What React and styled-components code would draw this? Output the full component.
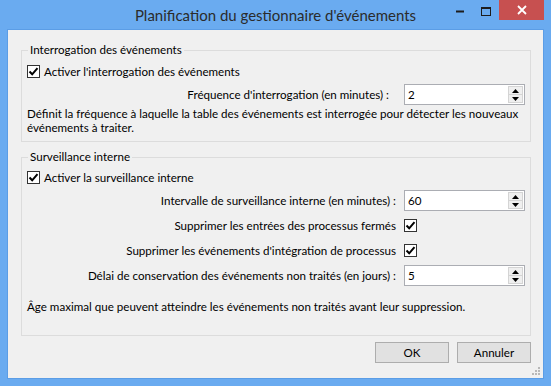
import styled, { createGlobalStyle } from "styled-components";

const StyleGlobal = createGlobalStyle`
  html, body {
    margin: 0;
    padding: 0;
    background: #6aabf0;
  }
  body {
    font-family: Lato, "Liberation Sans", sans-serif;
    font-size: 11.6px;
    color: #000000;
  }
`;

function Coche() {
  return (
    <svg width="11" height="11" viewBox="0 0 11 11">
      <path d="M1.5 5.5 L4.2 8.3 L9.5 2.2" fill="none" stroke="#000" strokeWidth="2" />
    </svg>
  );
}

function CaseACocher({ label }) {
  return (
    <LigneCase>
      <Case>
        <Coche />
      </Case>
      {label && <span>{label}</span>}
    </LigneCase>
  );
}

function ChampNumerique({ valeur }) {
  return (
    <Champ>
      <Valeur>{valeur}</Valeur>
      <Fleches>
        <Fleche>
          <svg width="7" height="4" viewBox="0 0 7 4">
            <path d="M0 4 L3.5 0 L7 4 Z" fill="#000" />
          </svg>
        </Fleche>
        <Fleche $bas>
          <svg width="7" height="4" viewBox="0 0 7 4">
            <path d="M0 0 L7 0 L3.5 4 Z" fill="#000" />
          </svg>
        </Fleche>
      </Fleches>
    </Champ>
  );
}

export default function App() {
  return (
    <>
      <StyleGlobal />
      <Fenetre>
        <BarreTitre>
          <span />
          <Titre>Planification du gestionnaire d'événements</Titre>
          <Commandes>
            <BoutonFenetre>
              <svg width="9" height="3" viewBox="0 0 9 3">
                <rect x="0" y="0.5" width="8" height="2" fill="#1d1d1d" />
              </svg>
            </BoutonFenetre>
            <BoutonFenetre>
              <svg width="10" height="9" viewBox="0 0 10 9">
                <rect x="0.5" y="1" width="9" height="7.5" fill="none" stroke="#1d1d1d" strokeWidth="1" />
                <rect x="0" y="0" width="10" height="2" fill="#1d1d1d" />
              </svg>
            </BoutonFenetre>
            <BoutonFermer>
              <svg width="10" height="10" viewBox="0 0 10 10">
                <path d="M1 1 L9 9 M9 1 L1 9" stroke="#fff" strokeWidth="1.8" />
              </svg>
            </BoutonFermer>
          </Commandes>
        </BarreTitre>

        <Client>
          <Groupe>
            <Legende>Interrogation des événements</Legende>
            <LigneActivation>
              <CaseACocher label="Activer l'interrogation des événements" />
            </LigneActivation>
            <Grille $ecart={15}>
              <Libelle>Fréquence d'interrogation (en minutes) :</Libelle>
              <ChampNumerique valeur="2" />
            </Grille>
            <Description $haut={2}>
              Définit la fréquence à laquelle la table des événements est interrogée pour détecter les nouveaux
              événements à traiter.
            </Description>
          </Groupe>

          <Groupe $bas={21} $marge={8}>
            <Legende>Surveillance interne</Legende>
            <LigneActivation $haut={5}>
              <CaseACocher label="Activer la surveillance interne" />
            </LigneActivation>
            <Grille $ecart={8}>
              <Libelle>Intervalle de surveillance interne (en minutes) :</Libelle>
              <ChampNumerique valeur="60" />
              <Libelle>Supprimer les entrées des processus fermés</Libelle>
              <CaseACocher />
              <Libelle>Supprimer les événements d'intégration de processus</Libelle>
              <CaseACocher />
              <Libelle>Délai de conservation des événements non traités (en jours) :</Libelle>
              <ChampNumerique valeur="5" />
            </Grille>
            <Description $haut={14}>
              Âge maximal que peuvent atteindre les événements non traités avant leur suppression.
            </Description>
          </Groupe>

          <Boutons>
            <Bouton>OK</Bouton>
            <Bouton>Annuler</Bouton>
          </Boutons>

          <Poignee width="9" height="9" viewBox="0 0 9 9">
            <rect x="6" y="0" width="2" height="2" fill="#b8b8b8" />
            <rect x="3" y="3" width="2" height="2" fill="#b8b8b8" />
            <rect x="6" y="3" width="2" height="2" fill="#b8b8b8" />
            <rect x="0" y="6" width="2" height="2" fill="#b8b8b8" />
            <rect x="3" y="6" width="2" height="2" fill="#b8b8b8" />
            <rect x="6" y="6" width="2" height="2" fill="#b8b8b8" />
          </Poignee>
        </Client>
      </Fenetre>
    </>
  );
}

const Fenetre = styled.div`
  width: 551px;
  height: 386px;
  box-sizing: border-box;
  background: #6aabf0;
  padding: 0 7px 7px 7px;
  display: flex;
  flex-direction: column;
`;

const BarreTitre = styled.div`
  height: 29px;
  display: grid;
  grid-template-columns: 1fr auto 1fr;
  align-items: start;
`;

const Titre = styled.div`
  font-size: 15px;
  line-height: 20px;
  padding-top: 5px;
  color: #2b2b2b;
  white-space: nowrap;
`;

const Commandes = styled.div`
  justify-self: end;
  display: flex;
  align-items: stretch;
  height: 20px;
`;

const BoutonFenetre = styled.div`
  width: 26px;
  display: flex;
  align-items: center;
  justify-content: center;
  padding-top: 3px;
  box-sizing: border-box;
`;

const BoutonFermer = styled.div`
  width: 45px;
  background: #c75050;
  display: flex;
  align-items: center;
  justify-content: center;
`;

const Client = styled.div`
  position: relative;
  flex: 1;
  background: #f0f0f0;
  border: 1px solid #5b9de6;
  padding: 13px 12px 0 13px;
  display: flex;
  flex-direction: column;
`;

const Groupe = styled.fieldset`
  margin: ${(p) => p.$marge || 0}px 0 0 0;
  padding: 0 5px ${(p) => (p.$bas === undefined ? 6 : p.$bas)}px 5px;
  border: 1px solid #dcdcdc;
  min-width: 0;
`;

const Legende = styled.legend`
  padding: 0 2px;
  margin-left: 1px;
  line-height: 14px;
`;

const LigneActivation = styled.div`
  margin-top: ${(p) => (p.$haut === undefined ? 6 : p.$haut)}px;
  height: 16px;
  display: flex;
  align-items: center;
`;

const LigneCase = styled.div`
  display: flex;
  align-items: center;
  gap: 4px;
  height: 21px;
  white-space: nowrap;
`;

const Case = styled.div`
  width: 13px;
  height: 13px;
  box-sizing: border-box;
  border: 1px solid #333333;
  background: #ffffff;
  display: flex;
  align-items: center;
  justify-content: center;
`;

const Grille = styled.div`
  margin-top: 5px;
  display: grid;
  grid-template-columns: 1fr 121px;
  grid-auto-rows: 21px;
  column-gap: ${(p) => p.$ecart}px;
  row-gap: 4px;
  align-items: center;
`;

const Libelle = styled.div`
  text-align: right;
  white-space: nowrap;
`;

const Champ = styled.div`
  height: 21px;
  box-sizing: border-box;
  border: 1px solid #abadb3;
  background: #ffffff;
  display: flex;
  align-items: center;
`;

const Valeur = styled.div`
  flex: 1;
  padding-left: 3px;
`;

const Fleches = styled.div`
  width: 15px;
  height: 17px;
  margin-right: 1px;
  display: flex;
  flex-direction: column;
  border: 1px solid #d4d4d4;
  box-sizing: border-box;
  background: #efefef;
`;

const Fleche = styled.div`
  flex: 1;
  display: flex;
  align-items: center;
  justify-content: center;
  border-top: ${(p) => (p.$bas ? "1px solid #d4d4d4" : "none")};
`;

const Description = styled.p`
  margin: ${(p) => p.$haut}px 0 0 0;
  line-height: 14px;
`;

const Boutons = styled.div`
  margin-top: 6px;
  display: flex;
  justify-content: flex-end;
  gap: 8px;
`;

const Bouton = styled.div`
  width: 74px;
  height: 21px;
  box-sizing: border-box;
  border: 1px solid #adadad;
  background: #e1e1e1;
  display: flex;
  align-items: center;
  justify-content: center;
`;

const Poignee = styled.svg`
  position: absolute;
  right: 2px;
  bottom: 2px;
`;
